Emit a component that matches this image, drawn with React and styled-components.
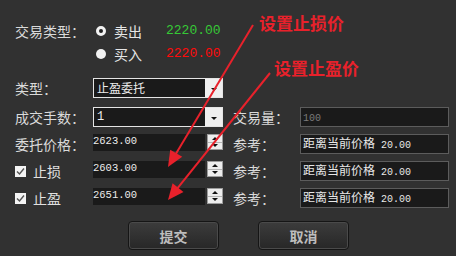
import React from "react";
import styled, { createGlobalStyle } from "styled-components";

const Global = createGlobalStyle`
  html, body { margin: 0; padding: 0; background: #313131; }
  body { font-family: "Noto Sans CJK SC", "Noto Sans", sans-serif; }
`;

const Panel = styled.div`
  position: relative;
  width: 456px;
  height: 256px;
  overflow: hidden;
  background: #313131;
  box-sizing: border-box;
  padding: 19px 7px 0 15px;
  display: flex;
  flex-direction: column;
`;

const Row = styled.div`
  display: flex;
  align-items: ${(p) => p.$align || "center"};
  height: ${(p) => p.$h}px;
  margin-top: ${(p) => p.$mt || 0}px;
`;

const Label = styled.div`
  width: ${(p) => p.$w || 78}px;
  margin-left: ${(p) => p.$ml || 0}px;
  flex: none;
  font-size: 14px;
  line-height: 20px;
  color: #dadada;
  white-space: nowrap;
  align-self: center;
`;

const RadioOption = styled.div`
  display: flex;
  align-items: center;
  width: 70px;
  margin-left: 3px;
  font-size: 14px;
  color: #e6e6e6;
`;

const Radio = styled.span`
  width: 10px;
  height: 10px;
  border-radius: 50%;
  box-sizing: border-box;
  margin-right: 8px;
  background: ${(p) => (p.$filled ? "#f2f2f2" : "#202020")};
  border: ${(p) => (p.$filled ? "none" : "3px solid #f2f2f2")};
`;

const Price = styled.span`
  font-family: "Liberation Mono", monospace;
  font-size: 13px;
  color: ${(p) => p.$color};
`;

const Select = styled.div`
  width: 130px;
  height: 20px;
  box-sizing: border-box;
  border: 1px solid #e4e4e4;
  background: #1a1a1a;
  display: flex;
  flex: none;
`;

const SelectText = styled.div`
  flex: 1;
  padding-left: 3px;
  font-size: 12px;
  line-height: 18px;
  color: #ececec;
  font-family: ${(p) => (p.$mono ? '"Liberation Mono", monospace' : "inherit")};
`;

const DropButton = styled.div`
  width: 17px;
  background: #efefef;
  display: flex;
  align-items: center;
  justify-content: center;
  &::after {
    content: "";
    margin-top: 3px;
    border-left: 3px solid transparent;
    border-right: 3px solid transparent;
    border-top: 3px solid #111;
  }
`;

const TextBox = styled.div`
  width: 149px;
  height: 20px;
  box-sizing: border-box;
  border: 1px solid #5c5c5c;
  background: #1a1a1a;
  padding-left: 2px;
  font-size: 12px;
  line-height: 16px;
  color: ${(p) => (p.$dim ? "#7a7a7a" : "#e8e8e8")};
  white-space: nowrap;
  align-self: flex-start;
`;

const Num = styled.span`
  font-family: "Liberation Mono", monospace;
  font-size: 10px;
  margin-left: ${(p) => p.$ml || 0}px;
`;

const PriceBox = styled.div`
  width: 112px;
  height: 17px;
  background: #1a1a1a;
  font-family: "Liberation Mono", monospace;
  font-size: 10.5px;
  line-height: 14px;
  color: #ececec;
  align-self: flex-start;
  flex: none;
`;

const Spin = styled.div`
  width: 16px;
  height: 16px;
  box-sizing: border-box;
  margin-left: 2px;
  border: 1px solid #9c9c9c;
  background: #ededed;
  display: flex;
  flex-direction: column;
  align-self: flex-start;
  flex: none;
`;

const SpinHalf = styled.div`
  flex: 1;
  display: flex;
  align-items: center;
  justify-content: center;
  border-top: ${(p) => (p.$down ? "1px solid #b4b4b4" : "none")};
  &::after {
    content: "";
    border-left: 3px solid transparent;
    border-right: 3px solid transparent;
    ${(p) => (p.$down ? "border-top: 3px solid #111;" : "border-bottom: 3px solid #111;")}
  }
`;

const CheckLabel = styled.div`
  width: 78px;
  flex: none;
  display: flex;
  align-items: center;
  font-size: 14px;
  color: #e0e0e0;
`;

const CheckBox = styled.span`
  width: 11px;
  height: 11px;
  background: #f4f4f4;
  margin-right: 7px;
  display: flex;
  align-items: center;
  justify-content: center;
`;

const ButtonRow = styled.div`
  display: flex;
  height: 29px;
  margin-top: 13px;
  padding-left: 113px;
  gap: 39px;
`;

const Button = styled.button`
  width: 91px;
  height: 29px;
  box-sizing: border-box;
  border: 1px solid #151515;
  border-radius: 4px;
  box-shadow: inset 0 0 0 1px #4a4a4a;
  background: linear-gradient(#3c3c3c, #272727);
  color: #bdbdbd;
  font-family: "Noto Sans CJK SC", sans-serif;
  font-weight: 700;
  font-size: 14px;
  padding: 0;
`;

const Note = styled.div`
  position: absolute;
  left: ${(p) => p.$x}px;
  top: ${(p) => p.$y}px;
  font-size: 17px;
  line-height: 17px;
  font-weight: 700;
  color: #e8212b;
  white-space: nowrap;
`;

const Overlay = styled.svg`
  position: absolute;
  left: 0;
  top: 0;
  pointer-events: none;
`;

function Arrow({ x1, y1, x2, y2 }) {
  const dx = x2 - x1;
  const dy = y2 - y1;
  const len = Math.hypot(dx, dy);
  const ux = dx / len;
  const uy = dy / len;
  const hl = 16;
  const hw = 7;
  const bx = x2 - hl * ux;
  const by = y2 - hl * uy;
  const px = -uy;
  const py = ux;
  const pts = `${x2},${y2} ${bx + hw * px},${by + hw * py} ${bx - hw * px},${by - hw * py}`;
  return (
    <g>
      <line x1={x1} y1={y1} x2={bx + 2 * ux} y2={by + 2 * uy} stroke="#e8212b" strokeWidth="2" />
      <polygon points={pts} fill="#e8212b" />
    </g>
  );
}

const Check = () => (
  <svg width="9" height="9" viewBox="0 0 9 9">
    <path d="M1 4.5 L3.5 7 L8 1.5" stroke="#555" strokeWidth="1.4" fill="none" />
  </svg>
);

export default function App() {
  return (
    <>
      <Global />
      <Panel>
        <Row $h={23}>
          <Label>交易类型：</Label>
          <RadioOption>
            <Radio />
            卖出
          </RadioOption>
          <Price $color="#36c936">2220.00</Price>
        </Row>
        <Row $h={23}>
          <Label />
          <RadioOption>
            <Radio $filled />
            买入
          </RadioOption>
          <Price $color="#ff0a0a">2220.00</Price>
        </Row>
        <Row $h={20} $mt={13}>
          <Label>类型：</Label>
          <Select>
            <SelectText>止盈委托</SelectText>
            <DropButton />
          </Select>
        </Row>
        <Row $h={20} $mt={9}>
          <Label>成交手数：</Label>
          <Select>
            <SelectText $mono>1</SelectText>
            <DropButton />
          </Select>
          <Label $w={67} $ml={10}>交易量：</Label>
          <TextBox $dim>
            <Num>100</Num>
          </TextBox>
        </Row>
        <Row $h={20} $mt={7} $align="flex-start">
          <Label>委托价格：</Label>
          <PriceBox>2623.00</PriceBox>
          <Spin>
            <SpinHalf />
            <SpinHalf $down />
          </Spin>
          <Label $w={67} $ml={10}>参考：</Label>
          <TextBox>
            距离当前价格<Num $ml={6}>20.00</Num>
          </TextBox>
        </Row>
        <Row $h={20} $mt={7} $align="flex-start">
          <CheckLabel>
            <CheckBox>
              <Check />
            </CheckBox>
            止损
          </CheckLabel>
          <PriceBox>2603.00</PriceBox>
          <Spin>
            <SpinHalf />
            <SpinHalf $down />
          </Spin>
          <Label $w={67} $ml={10}>参考：</Label>
          <TextBox>
            距离当前价格<Num $ml={6}>20.00</Num>
          </TextBox>
        </Row>
        <Row $h={20} $mt={7} $align="flex-start">
          <CheckLabel>
            <CheckBox>
              <Check />
            </CheckBox>
            止盈
          </CheckLabel>
          <PriceBox>2651.00</PriceBox>
          <Spin>
            <SpinHalf />
            <SpinHalf $down />
          </Spin>
          <Label $w={67} $ml={10}>参考：</Label>
          <TextBox>
            距离当前价格<Num $ml={6}>20.00</Num>
          </TextBox>
        </Row>
        <ButtonRow>
          <Button>提交</Button>
          <Button>取消</Button>
        </ButtonRow>

        <Note $x={259} $y={14}>设置止损价</Note>
        <Note $x={274} $y={59}>设置止盈价</Note>
        <Overlay width="456" height="256" viewBox="0 0 456 256">
          <Arrow x1={253} y1={25} x2={168} y2={167} />
          <Arrow x1={270} y1={73} x2={168} y2={200} />
        </Overlay>
      </Panel>
    </>
  );
}
